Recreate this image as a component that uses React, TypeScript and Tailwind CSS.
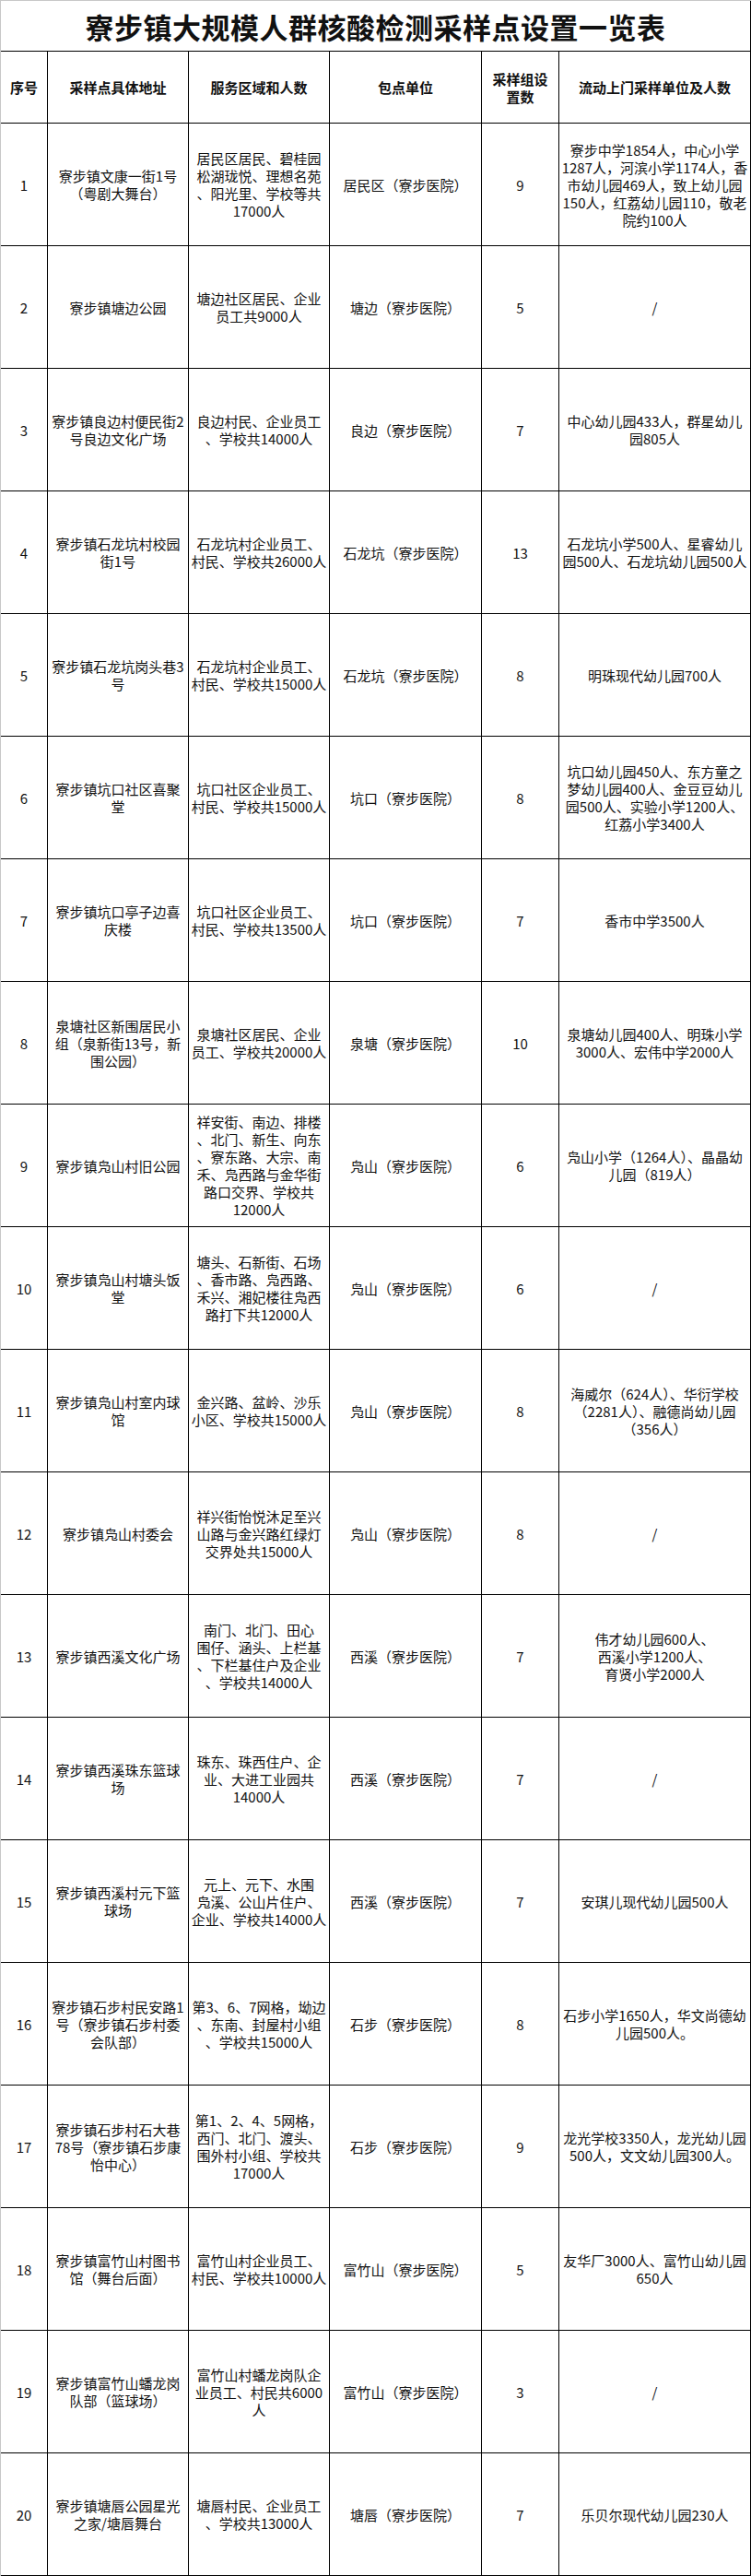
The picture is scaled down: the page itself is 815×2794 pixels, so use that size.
import React from "react";

type Row = {
  n: string;
  addr: string[];
  area: string[];
  unit: string;
  count: string;
  mobile: string[];
};

const rows: Row[] = [
  { n: "1", addr: ["寮步镇文康一街1号", "（粤剧大舞台）"], area: ["居民区居民、碧桂园", "松湖珑悦、理想名苑", "、阳光里、学校等共", "17000人"], unit: "居民区（寮步医院）", count: "9", mobile: ["寮步中学1854人，中心小学", "1287人，河滨小学1174人，香", "市幼儿园469人，致上幼儿园", "150人，红荔幼儿园110，敬老", "院约100人"] },
  { n: "2", addr: ["寮步镇塘边公园"], area: ["塘边社区居民、企业", "员工共9000人"], unit: "塘边（寮步医院）", count: "5", mobile: ["/"] },
  { n: "3", addr: ["寮步镇良边村便民街2", "号良边文化广场"], area: ["良边村民、企业员工", "、学校共14000人"], unit: "良边（寮步医院）", count: "7", mobile: ["中心幼儿园433人，群星幼儿", "园805人"] },
  { n: "4", addr: ["寮步镇石龙坑村校园", "街1号"], area: ["石龙坑村企业员工、", "村民、学校共26000人"], unit: "石龙坑（寮步医院）", count: "13", mobile: ["石龙坑小学500人、星睿幼儿", "园500人、石龙坑幼儿园500人"] },
  { n: "5", addr: ["寮步镇石龙坑岗头巷3", "号"], area: ["石龙坑村企业员工、", "村民、学校共15000人"], unit: "石龙坑（寮步医院）", count: "8", mobile: ["明珠现代幼儿园700人"] },
  { n: "6", addr: ["寮步镇坑口社区喜聚", "堂"], area: ["坑口社区企业员工、", "村民、学校共15000人"], unit: "坑口（寮步医院）", count: "8", mobile: ["坑口幼儿园450人、东方童之", "梦幼儿园400人、金豆豆幼儿", "园500人、实验小学1200人、", "红荔小学3400人"] },
  { n: "7", addr: ["寮步镇坑口亭子边喜", "庆楼"], area: ["坑口社区企业员工、", "村民、学校共13500人"], unit: "坑口（寮步医院）", count: "7", mobile: ["香市中学3500人"] },
  { n: "8", addr: ["泉塘社区新围居民小", "组（泉新街13号，新", "围公园）"], area: ["泉塘社区居民、企业", "员工、学校共20000人"], unit: "泉塘（寮步医院）", count: "10", mobile: ["泉塘幼儿园400人、明珠小学", "3000人、宏伟中学2000人"] },
  { n: "9", addr: ["寮步镇凫山村旧公园"], area: ["祥安街、南边、排楼", "、北门、新生、向东", "、寮东路、大宗、南", "禾、凫西路与金华街", "路口交界、学校共", "12000人"], unit: "凫山（寮步医院）", count: "6", mobile: ["凫山小学（1264人）、晶晶幼", "儿园（819人）"] },
  { n: "10", addr: ["寮步镇凫山村塘头饭", "堂"], area: ["塘头、石新街、石场", "、香市路、凫西路、", "禾兴、湘妃楼往凫西", "路打下共12000人"], unit: "凫山（寮步医院）", count: "6", mobile: ["/"] },
  { n: "11", addr: ["寮步镇凫山村室内球", "馆"], area: ["金兴路、盆岭、沙乐", "小区、学校共15000人"], unit: "凫山（寮步医院）", count: "8", mobile: ["海威尔（624人）、华衍学校", "（2281人）、融德尚幼儿园", "（356人）"] },
  { n: "12", addr: ["寮步镇凫山村委会"], area: ["祥兴街怡悦沐足至兴", "山路与金兴路红绿灯", "交界处共15000人"], unit: "凫山（寮步医院）", count: "8", mobile: ["/"] },
  { n: "13", addr: ["寮步镇西溪文化广场"], area: ["南门、北门、田心", "围仔、涵头、上栏基", "、下栏基住户及企业", "、学校共14000人"], unit: "西溪（寮步医院）", count: "7", mobile: ["伟才幼儿园600人、", "西溪小学1200人、", "育贤小学2000人"] },
  { n: "14", addr: ["寮步镇西溪珠东篮球", "场"], area: ["珠东、珠西住户、企", "业、大进工业园共", "14000人"], unit: "西溪（寮步医院）", count: "7", mobile: ["/"] },
  { n: "15", addr: ["寮步镇西溪村元下篮", "球场"], area: ["元上、元下、水围", "凫溪、公山片住户、", "企业、学校共14000人"], unit: "西溪（寮步医院）", count: "7", mobile: ["安琪儿现代幼儿园500人"] },
  { n: "16", addr: ["寮步镇石步村民安路1", "号（寮步镇石步村委", "会队部）"], area: ["第3、6、7网格，坳边", "、东南、封屋村小组", "、学校共15000人"], unit: "石步（寮步医院）", count: "8", mobile: ["石步小学1650人，华文尚德幼", "儿园500人。"] },
  { n: "17", addr: ["寮步镇石步村石大巷", "78号（寮步镇石步康", "怡中心）"], area: ["第1、2、4、5网格，", "西门、北门、渡头、", "围外村小组、学校共", "17000人"], unit: "石步（寮步医院）", count: "9", mobile: ["龙光学校3350人，龙光幼儿园", "500人，文文幼儿园300人。"] },
  { n: "18", addr: ["寮步镇富竹山村图书", "馆（舞台后面）"], area: ["富竹山村企业员工、", "村民、学校共10000人"], unit: "富竹山（寮步医院）", count: "5", mobile: ["友华厂3000人、富竹山幼儿园", "650人"] },
  { n: "19", addr: ["寮步镇富竹山蟠龙岗", "队部（篮球场）"], area: ["富竹山村蟠龙岗队企", "业员工、村民共6000", "人"], unit: "富竹山（寮步医院）", count: "3", mobile: ["/"] },
  { n: "20", addr: ["寮步镇塘唇公园星光", "之家/塘唇舞台"], area: ["塘唇村民、企业员工", "、学校共13000人"], unit: "塘唇（寮步医院）", count: "7", mobile: ["乐贝尔现代幼儿园230人"] },
];

function Lines({ lines }: { lines: string[] }) {
  return (
    <div className="flex flex-col items-center">
      {lines.map((l, i) => (
        <span key={i} className="whitespace-nowrap">
          {l}
        </span>
      ))}
    </div>
  );
}

const cell =
  "flex items-center justify-center text-center border-r border-b border-black overflow-visible";

export default function App() {
  return (
    <div
      className="w-[815px] bg-white text-[#111] border-l border-t border-[#c8c8c8]"
      style={{ fontFamily: '"Noto Sans CJK SC", "Noto Sans", sans-serif' }}
    >
      <div className="h-[55px] flex items-center justify-center border-r border-b border-black">
        <span className="text-[31px] font-bold leading-none tracking-[0.5px]">
          寮步镇大规模人群核酸检测采样点设置一览表
        </span>
      </div>
      <div className="grid grid-cols-[51px_153px_153px_165px_84px_208px] h-[78px] text-[15px] leading-[19px] font-bold">
        <div className={cell}>序号</div>
        <div className={cell}>采样点具体地址</div>
        <div className={cell}>服务区域和人数</div>
        <div className={cell}>包点单位</div>
        <div className={cell}>
          <Lines lines={["采样组设", "置数"]} />
        </div>
        <div className={cell}>流动上门采样单位及人数</div>
      </div>
      {rows.map((r) => (
        <div
          key={r.n}
          className="grid grid-cols-[51px_153px_153px_165px_84px_208px] h-[133px] text-[15px] leading-[19px]"
        >
          <div className={cell}>{r.n}</div>
          <div className={cell}>
            <Lines lines={r.addr} />
          </div>
          <div className={cell}>
            <Lines lines={r.area} />
          </div>
          <div className={cell}>{r.unit}</div>
          <div className={cell}>{r.count}</div>
          <div className={cell}>
            <Lines lines={r.mobile} />
          </div>
        </div>
      ))}
    </div>
  );
}
